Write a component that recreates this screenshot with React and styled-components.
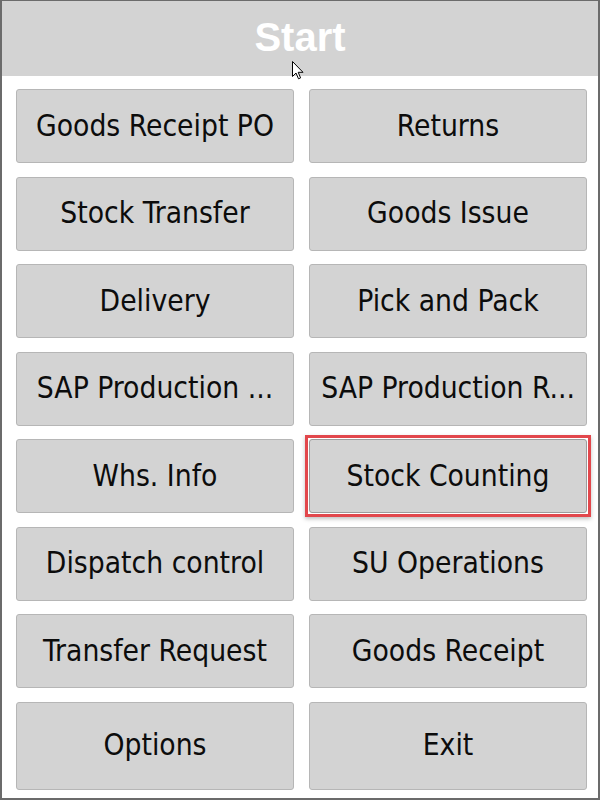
import React from 'react'
import styled, { createGlobalStyle } from 'styled-components'

const GlobalStyle = createGlobalStyle`
  html, body {
    margin: 0;
    padding: 0;
    background: #ffffff;
  }
`;

const Window = styled.div`
  position: relative;
  box-sizing: border-box;
  width: 600px;
  height: 800px;
  border: 2px solid #6b6b6b;
  border-top-width: 1px;
  background: #ffffff;
  display: flex;
  flex-direction: column;
  overflow: hidden;
`;

const Header = styled.div`
  height: 75px;
  background: #d3d3d3;
  display: flex;
  align-items: center;
  justify-content: center;
  color: #ffffff;
  font-family: "Liberation Sans", Arial, sans-serif;
  font-weight: bold;
  font-size: 40px;
  padding-bottom: 3px;
  box-sizing: border-box;
`;

const Grid = styled.div`
  display: grid;
  grid-template-columns: 278px 278px;
  grid-template-rows: repeat(7, 74px) 88px;
  column-gap: 15px;
  row-gap: 13.5px;
  padding: 13px 0 0 14px;
`;

const Tile = styled.button`
  position: relative;
  box-sizing: border-box;
  margin: 0;
  padding: 0 0 2px;
  background: #d3d3d3;
  border: 1px solid ${p => (p.$active ? '#9c9c9c' : '#b6b6b6')};
  border-radius: 3px;
  color: #0c0c0c;
  font-family: "DejaVu Sans Condensed", "DejaVu Sans", sans-serif;
  font-stretch: condensed;
  font-size: 29.7px;
  white-space: nowrap;
  cursor: pointer;

  &::after {
    content: '';
    display: ${p => (p.$active ? 'block' : 'none')};
    position: absolute;
    inset: -5px;
    border: 3px solid #e2474c;
    box-shadow: 0 2px 4px rgba(0, 0, 0, 0.25);
    pointer-events: none;
  }
`;

const Pointer = styled.svg`
  position: absolute;
  left: 290px;
  top: 60px;
`;

const items = [
  'Goods Receipt PO', 'Returns',
  'Stock Transfer', 'Goods Issue',
  'Delivery', 'Pick and Pack',
  'SAP Production ...', 'SAP Production R...',
  'Whs. Info', 'Stock Counting',
  'Dispatch control', 'SU Operations',
  'Transfer Request', 'Goods Receipt',
  'Options', 'Exit',
]

const App = () => {
  return (
    <>
      <GlobalStyle />
      <Window>
        <Header>Start</Header>
        <Grid>
          {items.map(label => (
            <Tile key={label} $active={label === 'Stock Counting'}>{label}</Tile>
          ))}
        </Grid>
        <Pointer width="12" height="19" viewBox="0 0 12 19">
          <path d="M0.5 0.5 L0.5 15.5 L4 12 L6.5 17.8 L8.6 16.9 L6.2 11.3 L11 11.3 Z"
            fill="#ffffff" stroke="#000000" strokeWidth="1" strokeLinejoin="round" />
        </Pointer>
      </Window>
    </>
  )
}

export default App
